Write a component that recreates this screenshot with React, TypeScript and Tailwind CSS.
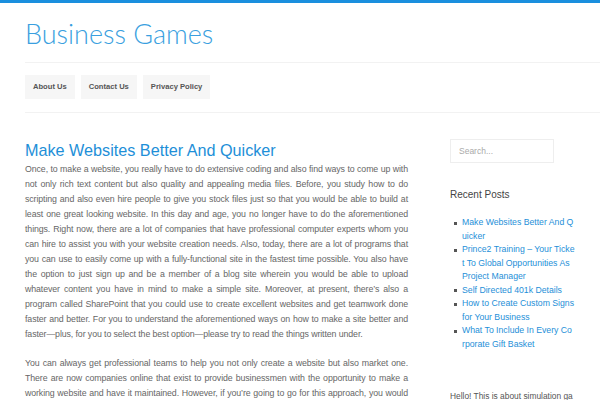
const navItems = ['About Us', 'Contact Us', 'Privacy Policy'];

const recentPosts = [
  'Make Websites Better And Quicker',
  'Prince2 Training – Your Ticket To Global Opportunities As Project Manager',
  'Self Directed 401k Details',
  'How to Create Custom Signs for Your Business',
  'What To Include In Every Corporate Gift Basket',
];

export default function App() {
  return (
    <div className="w-[600px] h-[400px] overflow-hidden bg-white font-['Liberation_Sans',Arial,sans-serif]">
      {/* Top accent */}
      <div className="h-[3px] bg-[#1a8fde]" />

      {/* Header */}
      <header className="pl-[25px]">
        <div className="h-[60px] pt-[15px] border-b border-[#f2f2f2]">
          <h1 className="font-['Lato',sans-serif] font-light text-[27px] leading-[32px] text-[#3a9fe0]">
            Business Games
          </h1>
        </div>
        <nav className="h-[50px] border-b border-[#f2f2f2] pt-[12px]">
          <ul className="flex gap-[6px]">
            {navItems.map((item) => (
              <li
                key={item}
                className="h-[24px] px-[8px] flex items-center bg-[#f6f6f6] text-[7.6px] font-bold text-[#555]"
              >
                {item}
              </li>
            ))}
          </ul>
        </nav>
      </header>

      {/* Main */}
      <div className="flex pl-[25px] pt-[26px]">
        <main className="w-[383px] shrink-0">
          <h2 className="text-[16.2px] leading-[22px] text-[#1e8fd8]">Make Websites Better And Quicker</h2>
          <div className="text-[8.8px] leading-[15px] tracking-[-0.1px] text-[#666] text-justify mt-[1px]">
            <p>
              Once, to make a website, you really have to do extensive coding and also find ways to come up with
              not only rich text content but also quality and appealing media files. Before, you study how to do
              scripting and also even hire people to give you stock files just so that you would be able to build at
              least one great looking website. In this day and age, you no longer have to do the aforementioned
              things. Right now, there are a lot of companies that have professional computer experts whom you
              can hire to assist you with your website creation needs. Also, today, there are a lot of programs that
              you can use to easily come up with a fully-functional site in the fastest time possible. You also have
              the option to just sign up and be a member of a blog site wherein you would be able to upload
              whatever content you have in mind to make a simple site. Moreover, at present, there’s also a
              program called SharePoint that you could use to create excellent websites and get teamwork done
              faster and better. For you to understand the aforementioned ways on how to make a site better and
              faster—plus, for you to select the best option—please try to read the things written under.
            </p>
            <p className="mt-[14px]">
              You can always get professional teams to help you not only create a website but also market one.
              There are now companies online that exist to provide businessmen with the opportunity to make a
              working website and have it maintained. However, if you’re going to go for this approach, you would
              need to be ready to spend some money.
            </p>
          </div>
        </main>

        {/* Sidebar */}
        <aside className="ml-[42px] w-[126px] shrink-0">
          <div className="w-[104px] h-[24px] border border-[#eee] flex items-center px-[8px] text-[8.5px] text-[#aaa]">
            Search...
          </div>

          <h3 className="mt-[25px] text-[10px] leading-[14px] text-[#444]">Recent Posts</h3>

          <ul className="mt-[14px] pl-[4px]">
            {recentPosts.map((post) => (
              <li key={post} className="flex gap-[5px] text-[8.7px] leading-[13.5px]">
                <span className="mt-[5.5px] w-[3px] h-[3px] bg-[#555] shrink-0" />
                <span className="w-[112.8px] shrink-0 text-[#1e8fd8] break-all">{post}</span>
              </li>
            ))}
          </ul>

          <p className="mt-[38px] text-[8.4px] leading-[15px] text-[#555] break-all">
            Hello! This is about simulation games and how they help people learn business.
          </p>
        </aside>
      </div>
    </div>
  );
}
